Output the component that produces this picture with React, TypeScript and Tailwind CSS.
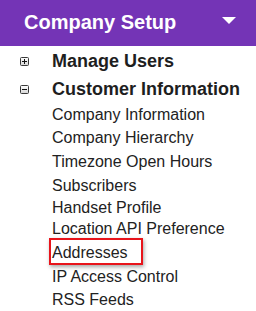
import React from "react";

function Toggle({ open }: { open: boolean }) {
  return (
    <svg width="9" height="9" viewBox="0 0 9 9" className="block">
      <defs>
        <linearGradient id={open ? "gm" : "gp"} x1="0" y1="0" x2="0" y2="1">
          <stop offset="0" stopColor="#ffffff" />
          <stop offset="1" stopColor="#d4d4d4" />
        </linearGradient>
      </defs>
      <rect x="0.5" y="0.5" width="8" height="8" rx="1" fill={`url(#${open ? "gm" : "gp"})`} stroke="#3a3a3a" strokeWidth="1" />
      <rect x="2" y="4" width="5" height="1" fill="#111" />
      {!open && <rect x="4" y="2" width="1" height="5" fill="#111" />}
    </svg>
  );
}

const items: { label: string; h: string; boxed?: boolean }[] = [
  { label: "Company Information", h: "h-[23px]" },
  { label: "Company Hierarchy", h: "h-[24px]" },
  { label: "Timezone Open Hours", h: "h-[24px]" },
  { label: "Subscribers", h: "h-[22px]" },
  { label: "Handset Profile", h: "h-[21px]" },
  { label: "Location API Preference", h: "h-[24px]" },
  { label: "Addresses", h: "h-[24px]", boxed: true },
  { label: "IP Access Control", h: "h-[23px]" },
  { label: "RSS Feeds", h: "h-[23px]" },
];

export default function App() {
  return (
    <div
      className="w-[256px] h-[311px] bg-white overflow-hidden"
      style={{ fontFamily: '"Liberation Sans", Arial, sans-serif' }}
    >
      <div className="h-[46px] bg-[#7434b6] flex items-start justify-between pt-[11px] pl-[24px] pr-[20px]">
        <span className="text-[20px] leading-[23px] font-bold text-white">Company Setup</span>
        <svg width="14" height="7" viewBox="0 0 14 7" className="mt-[6px] block">
          <polygon points="0,0 14,0 7,7" fill="#ffffff" />
        </svg>
      </div>
      <div className="mt-[1px]">
        <div className="flex items-start h-[28px] pl-[20px]">
          <div className="mt-[10px]">
            <Toggle open={false} />
          </div>
          <span className="ml-[23px] text-[18px] leading-[28px] font-bold text-[#1e1e1e]">Manage Users</span>
        </div>
        <div className="flex items-start h-[28px] pl-[20px]">
          <div className="mt-[10px]">
            <Toggle open={true} />
          </div>
          <span className="ml-[23px] text-[18px] leading-[28px] font-bold text-[#1e1e1e]">Customer Information</span>
        </div>
        <div className="flex flex-col pl-[52px]">
          {items.map((it) => (
            <div key={it.label} className={`${it.h} text-[16px] leading-[23px] text-[#222222]`}>
              <span className="relative inline-block">
                {it.label}
                {it.boxed && (
                  <span className="absolute left-[-3px] top-[-3.5px] w-[94px] h-[27px] border-2 border-[#e8141b] shadow-[1px_2px_4px_rgba(0,0,0,0.35)]" />
                )}
              </span>
            </div>
          ))}
        </div>
      </div>
    </div>
  );
}
